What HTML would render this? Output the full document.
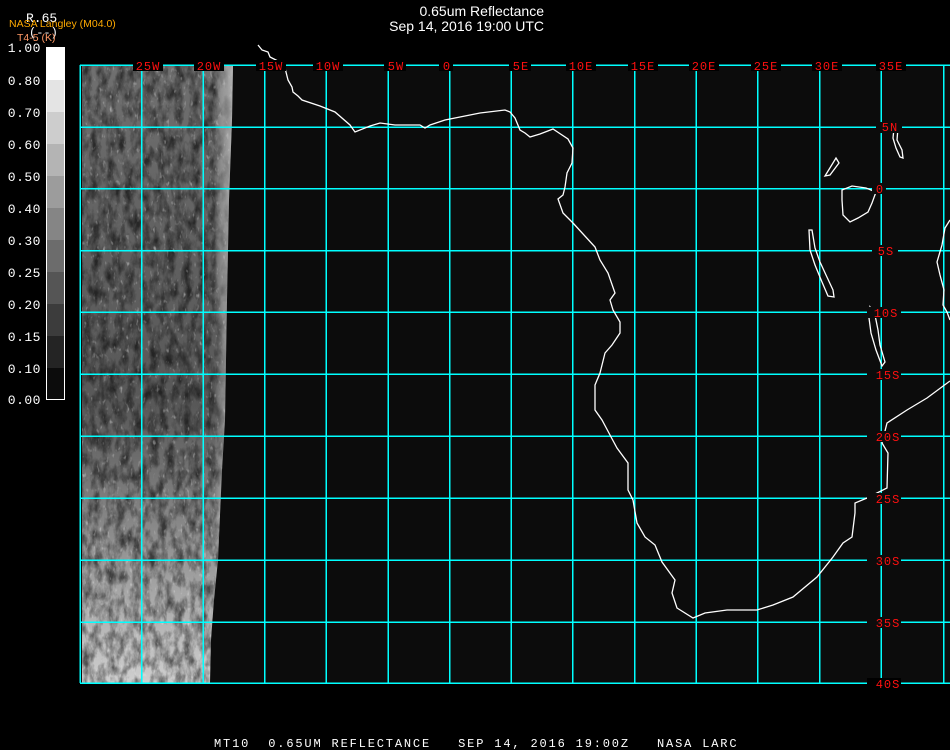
<!DOCTYPE html>
<html><head><meta charset="utf-8"><style>
html,body{margin:0;padding:0;background:#000;width:950px;height:750px;overflow:hidden}
svg{display:block}
.t{font-family:"Liberation Sans",sans-serif;fill:#fff;font-size:14px}
.m{font-family:"Liberation Mono","DejaVu Sans Mono",monospace;}
</style></head><body>
<svg width="950" height="750" viewBox="0 0 950 750" xmlns="http://www.w3.org/2000/svg">
<defs>
<filter id="n" x="0" y="0" width="100%" height="100%">
<feTurbulence type="fractalNoise" baseFrequency="0.12 0.06" numOctaves="4" seed="4"/>
<feColorMatrix type="matrix" values="0 0 0 0 0  0 0 0 0 0  0 0 0 0 0  0 0 0 -2.2 1.4"/>
</filter>
<filter id="n2" x="0" y="0" width="100%" height="100%">
<feTurbulence type="fractalNoise" baseFrequency="0.3 0.15" numOctaves="2" seed="9"/>
<feColorMatrix type="matrix" values="0 0 0 0 1  0 0 0 0 1  0 0 0 0 1  0 0 0 3 -1.9"/>
</filter>
<linearGradient id="g" x1="0" y1="0" x2="0" y2="1">
<stop offset="0" stop-color="#707070"/>
<stop offset="0.3" stop-color="#606060"/>
<stop offset="0.55" stop-color="#585858"/>
<stop offset="0.75" stop-color="#8a8a8a"/>
<stop offset="1" stop-color="#d0d0d0"/>
</linearGradient>
<linearGradient id="e" x1="0" y1="0" x2="1" y2="0">
<stop offset="0" stop-color="#fff" stop-opacity="0"/>
<stop offset="0.84" stop-color="#fff" stop-opacity="0"/>
<stop offset="0.92" stop-color="#bbb" stop-opacity="0.6"/>
<stop offset="1" stop-color="#eee" stop-opacity="0.9"/>
</linearGradient>
<clipPath id="sc"><path d="M82 65 L233 65 L232 120 L229 200 L227 300 L225 420 L222 470 L218 560 L214 600 L211 640 L210 683 L82 683 Z"/></clipPath>
</defs>
<rect x="80" y="65" width="870" height="618" fill="#0c0c0c"/>
<g clip-path="url(#sc)">
<rect x="80" y="65" width="160" height="620" fill="url(#g)"/>
<rect x="80" y="65" width="160" height="620" fill="#000" filter="url(#n)" opacity="0.6"/>
<rect x="80" y="65" width="160" height="620" filter="url(#n2)" opacity="0.5"/>
<rect x="80" y="65" width="160" height="620" fill="url(#e)"/>
</g>
<g stroke="#00ffff" stroke-width="1.5" shape-rendering="crispEdges">
<line x1="80" y1="65" x2="80" y2="683"/>
<line x1="141.7" y1="65" x2="141.7" y2="683"/><line x1="203.3" y1="65" x2="203.3" y2="683"/>
<line x1="264.5" y1="65" x2="264.5" y2="683"/><line x1="326" y1="65" x2="326" y2="683"/>
<line x1="388" y1="65" x2="388" y2="683"/><line x1="449.5" y1="65" x2="449.5" y2="683"/>
<line x1="511" y1="65" x2="511" y2="683"/><line x1="572.7" y1="65" x2="572.7" y2="683"/>
<line x1="634.5" y1="65" x2="634.5" y2="683"/><line x1="696" y1="65" x2="696" y2="683"/>
<line x1="757.5" y1="65" x2="757.5" y2="683"/><line x1="819.5" y1="65" x2="819.5" y2="683"/>
<line x1="881" y1="65" x2="881" y2="683"/><line x1="943.5" y1="65" x2="943.5" y2="683"/>
<line x1="80" y1="65" x2="950" y2="65"/><line x1="80" y1="127" x2="950" y2="127"/>
<line x1="80" y1="188.5" x2="950" y2="188.5"/><line x1="80" y1="250.5" x2="950" y2="250.5"/>
<line x1="80" y1="312" x2="950" y2="312"/><line x1="80" y1="374" x2="950" y2="374"/>
<line x1="80" y1="436" x2="950" y2="436"/><line x1="80" y1="498" x2="950" y2="498"/>
<line x1="80" y1="560" x2="950" y2="560"/><line x1="80" y1="622" x2="950" y2="622"/>
<line x1="80" y1="683" x2="950" y2="683"/>
</g>
<g fill="none" stroke="#fff" stroke-width="1.3">
<polyline points="258,45 262,50 268,52 270,57 280,62 285,68 288,80 292,87 293,92 298,96 302,100 320,106 335,112 350,125 355,132 370,126 380,123 395,125 420,125 425,128 430,125 445,120 460,117 480,113 505,110 510,112 515,118 520,130 525,133 530,137 540,134 553,129 559,133 568,139 573,148 572,163 567,173 565,187 563,195 558,199 563,213 573,223 595,247 600,260 608,273 615,293 610,300 613,310 620,322 620,333 612,345 605,353 600,373 595,385 595,410 602,420 610,435 617,448 628,463 628,490 633,500 637,523 645,537 655,545 662,562 675,580 672,593 677,608 693,618 705,613 727,610 757,610 773,605 793,597 817,577 833,557 843,543 852,537 855,513 855,503 867,498 887,488 888,453 882,443 887,423 907,410 927,398 950,381"/>
<path d="M825 176 L836 158 L839 163 L830 175 Z"/>
<path d="M842 190 L852 186 L866 188 L876 192 L872 203 L868 212 L858 218 L850 222 L843 215 L842 200 Z"/>
<path d="M809 230 L812 230 L815 248 L820 262 L826 275 L833 290 L834 297 L828 296 L822 282 L815 265 L810 250 Z"/>
<path d="M870 307 L875 315 L878 330 L880 345 L885 362 L882 366 L876 350 L871 333 L869 318 Z"/>
<path d="M894 128 L898 128 L897 140 L902 150 L903 158 L900 157 L896 148 L893 138 Z"/>
<polyline points="950,220 945,228 942,245 937,262 940,275 944,290 943,305 947,312 950,320"/>
</g>
<g class="m" font-size="12" fill="#ff1010" text-anchor="middle" letter-spacing="1">
<rect x="133" y="60" width="30" height="11" fill="#000"/><text x="148" y="70">25W</text>
<rect x="194" y="60" width="30" height="11" fill="#000"/><text x="209" y="70">20W</text>
<rect x="256" y="60" width="30" height="11" fill="#000"/><text x="271" y="70">15W</text>
<rect x="313" y="60" width="30" height="11" fill="#000"/><text x="328" y="70">10W</text>
<rect x="384" y="60" width="22" height="11" fill="#000"/><text x="396" y="70">5W</text>
<rect x="439" y="60" width="14" height="11" fill="#000"/><text x="447" y="70">0</text>
<rect x="509" y="60" width="22" height="11" fill="#000"/><text x="521" y="70">5E</text>
<rect x="566" y="60" width="30" height="11" fill="#000"/><text x="581" y="70">10E</text>
<rect x="628" y="60" width="30" height="11" fill="#000"/><text x="643" y="70">15E</text>
<rect x="689" y="60" width="30" height="11" fill="#000"/><text x="704" y="70">20E</text>
<rect x="751" y="60" width="30" height="11" fill="#000"/><text x="766" y="70">25E</text>
<rect x="812" y="60" width="30" height="11" fill="#000"/><text x="827" y="70">30E</text>
<rect x="876" y="60" width="30" height="11" fill="#000"/><text x="891" y="70">35E</text>
</g>
<g class="m" font-size="12" fill="#ff1010" text-anchor="middle" letter-spacing="1">
<rect x="876" y="122" width="26" height="11" fill="#0c0c0c"/><text x="890" y="131">5N</text>
<rect x="872" y="183" width="14" height="11" fill="#0c0c0c"/><text x="880" y="193">0</text>
<rect x="872" y="245" width="26" height="11" fill="#0c0c0c"/><text x="886" y="255">5S</text>
<rect x="867" y="307" width="34" height="11" fill="#0c0c0c"/><text x="886" y="317">10S</text>
<rect x="867" y="369" width="34" height="11" fill="#0c0c0c"/><text x="888" y="379">15S</text>
<rect x="867" y="431" width="34" height="11" fill="#0c0c0c"/><text x="888" y="441">20S</text>
<rect x="867" y="493" width="34" height="11" fill="#0c0c0c"/><text x="888" y="503">25S</text>
<rect x="867" y="555" width="34" height="11" fill="#0c0c0c"/><text x="888" y="565">30S</text>
<rect x="867" y="617" width="34" height="11" fill="#0c0c0c"/><text x="888" y="627">35S</text>
<rect x="867" y="678" width="34" height="11" fill="#000"/><text x="888" y="688">40S</text>
</g>
<g shape-rendering="crispEdges">
<rect x="46" y="47" width="19" height="33" fill="#fff"/>
<rect x="46" y="80" width="19" height="32" fill="#e4e4e4"/>
<rect x="46" y="112" width="19" height="32" fill="#cdcdcd"/>
<rect x="46" y="144" width="19" height="32" fill="#b4b4b4"/>
<rect x="46" y="176" width="19" height="32" fill="#9c9c9c"/>
<rect x="46" y="208" width="19" height="32" fill="#858585"/>
<rect x="46" y="240" width="19" height="32" fill="#6c6c6c"/>
<rect x="46" y="272" width="19" height="32" fill="#555"/>
<rect x="46" y="304" width="19" height="32" fill="#3c3c3c"/>
<rect x="46" y="336" width="19" height="32" fill="#242424"/>
<rect x="46" y="368" width="19" height="32" fill="#0c0c0c"/>
<rect x="46.5" y="47.5" width="18" height="352" fill="none" stroke="#fff"/>
</g>
<g class="m" font-size="13" fill="#fff" text-anchor="end" letter-spacing="0.5">
<text x="41" y="52">1.00</text><text x="41" y="85">0.80</text><text x="41" y="117">0.70</text>
<text x="41" y="149">0.60</text><text x="41" y="181">0.50</text><text x="41" y="213">0.40</text>
<text x="41" y="245">0.30</text><text x="41" y="277">0.25</text><text x="41" y="309">0.20</text>
<text x="41" y="341">0.15</text><text x="41" y="373">0.10</text><text x="41" y="404">0.00</text>
</g>
<text class="m" x="26" y="22" font-size="13" fill="#fff">R.65</text>
<text class="m" x="29" y="36" font-size="12" fill="#fff">(--)</text>
<text x="9" y="27" font-family="Liberation Sans,sans-serif" font-size="10.5" fill="#ffaa00">NASA Langley (M04.0)</text>
<text x="17" y="41" font-family="Liberation Sans,sans-serif" font-size="10.5" fill="#ff9966">T4-5 (K)</text>
<text class="t" x="544" y="16" text-anchor="end">0.65um Reflectance</text>
<text class="t" x="544" y="31" text-anchor="end">Sep 14, 2016 19:00 UTC</text>
<text class="m" x="214" y="747" font-size="12" fill="#fff" letter-spacing="1.84" xml:space="preserve">MT10  0.65UM REFLECTANCE   SEP 14, 2016 19:00Z   NASA LARC</text>
</svg>
</body></html>
